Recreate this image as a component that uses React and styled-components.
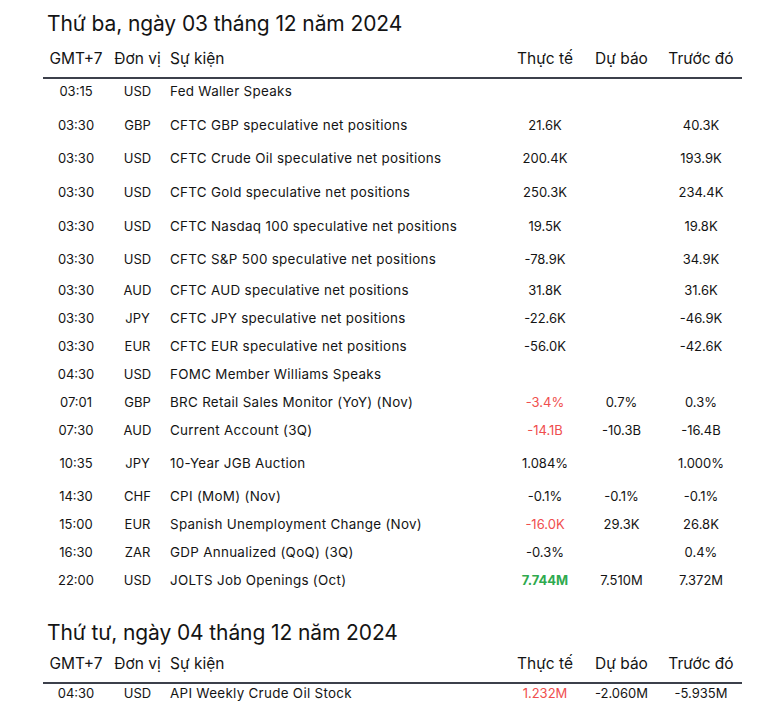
import React from "react";
import styled, { createGlobalStyle } from "styled-components";

const GlobalStyle = createGlobalStyle`
  html, body {
    margin: 0;
    padding: 0;
    background: #ffffff;
  }
  body {
    font-family: Inter, "Open Sans", "DejaVu Sans", sans-serif;
    color: #141414;
  }
`;

const days = [
  {
    title: "Thứ ba, ngày 03 tháng 12 năm 2024",
    head: 41,
    rows: [
      { h: 34, time: "03:15", unit: "USD", event: "Fed Waller Speaks" },
      { h: 33, time: "03:30", unit: "GBP", event: "CFTC GBP speculative net positions", actual: "21.6K", prev: "40.3K" },
      { h: 34, time: "03:30", unit: "USD", event: "CFTC Crude Oil speculative net positions", actual: "200.4K", prev: "193.9K" },
      { h: 34, time: "03:30", unit: "USD", event: "CFTC Gold speculative net positions", actual: "250.3K", prev: "234.4K" },
      { h: 33, time: "03:30", unit: "USD", event: "CFTC Nasdaq 100 speculative net positions", actual: "19.5K", prev: "19.8K" },
      { h: 31, time: "03:30", unit: "USD", event: "CFTC S&P 500 speculative net positions", actual: "-78.9K", prev: "34.9K" },
      { h: 28, time: "03:30", unit: "AUD", event: "CFTC AUD speculative net positions", actual: "31.8K", prev: "31.6K" },
      { h: 28, time: "03:30", unit: "JPY", event: "CFTC JPY speculative net positions", actual: "-22.6K", prev: "-46.9K" },
      { h: 28, time: "03:30", unit: "EUR", event: "CFTC EUR speculative net positions", actual: "-56.0K", prev: "-42.6K" },
      { h: 28, time: "04:30", unit: "USD", event: "FOMC Member Williams Speaks" },
      { h: 28, time: "07:01", unit: "GBP", event: "BRC Retail Sales Monitor (YoY) (Nov)", actual: "-3.4%", tone: "down", forecast: "0.7%", prev: "0.3%" },
      { h: 33, time: "07:30", unit: "AUD", event: "Current Account (3Q)", actual: "-14.1B", tone: "down", forecast: "-10.3B", prev: "-16.4B" },
      { h: 33, time: "10:35", unit: "JPY", event: "10-Year JGB Auction", actual: "1.084%", prev: "1.000%" },
      { h: 28, time: "14:30", unit: "CHF", event: "CPI (MoM) (Nov)", actual: "-0.1%", forecast: "-0.1%", prev: "-0.1%" },
      { h: 28, time: "15:00", unit: "EUR", event: "Spanish Unemployment Change (Nov)", actual: "-16.0K", tone: "down", forecast: "29.3K", prev: "26.8K" },
      { h: 28, time: "16:30", unit: "ZAR", event: "GDP Annualized (QoQ) (3Q)", actual: "-0.3%", prev: "0.4%" },
      { h: 28, time: "22:00", unit: "USD", event: "JOLTS Job Openings (Oct)", actual: "7.744M", tone: "up", forecast: "7.510M", prev: "7.372M" },
    ],
  },
  {
    title: "Thứ tư, ngày 04 tháng 12 năm 2024",
    head: 37,
    rows: [
      { h: 28, lift: 3, time: "04:30", unit: "USD", event: "API Weekly Crude Oil Stock", actual: "1.232M", tone: "down", forecast: "-2.060M", prev: "-5.935M" },
    ],
  },
];

const Page = styled.div`
  padding: 10px 40px 0 43px;
  width: 699px;
`;

const Section = styled.section`
  & + & {
    margin-top: 23px;
  }
`;

const DayTitle = styled.h2`
  margin: 0 0 0 4px;
  font-size: 21px;
  font-weight: 400;
  line-height: 28px;
  letter-spacing: -0.1px;
`;

const Grid = styled.div`
  display: grid;
  grid-template-columns: 66px 57px 341px 76px 77px 82px;
`;

const HeadRow = styled(Grid)`
  height: ${(p) => p.$h}px;
  box-sizing: border-box;
  align-items: end;
  padding-bottom: 8px;
  line-height: 20px;
  border-bottom: 2px solid #3c404b;
  font-size: 15.5px;
`;

const HeadCell = styled.div`
  text-align: ${(p) => p.$align || "center"};
  padding-left: ${(p) => (p.$align === "left" ? "4px" : "0")};
  white-space: nowrap;
`;

const Row = styled(Grid)`
  height: ${(p) => p.$h}px;
  margin-top: ${(p) => -(p.$lift || 0)}px;
  align-items: start;
  font-size: 13px;
  line-height: 24px;
`;

const Cell = styled.div`
  text-align: center;
  white-space: nowrap;
  color: ${(p) => (p.$tone === "down" ? "#f04e4e" : p.$tone === "up" ? "#2faa4f" : "#141414")};
  font-weight: ${(p) => (p.$tone === "up" ? 700 : 400)};
`;

const EventCell = styled.div`
  padding-left: 4px;
  white-space: nowrap;
  font-size: 13.4px;
  letter-spacing: 0.3px;
`;

export default function App() {
  return (
    <>
      <GlobalStyle />
      <Page>
        {days.map((day) => (
          <Section key={day.title}>
            <DayTitle>{day.title}</DayTitle>
            <HeadRow $h={day.head}>
              <HeadCell>GMT+7</HeadCell>
              <HeadCell>Đơn vị</HeadCell>
              <HeadCell $align="left">Sự kiện</HeadCell>
              <HeadCell>Thực tế</HeadCell>
              <HeadCell>Dự báo</HeadCell>
              <HeadCell>Trước đó</HeadCell>
            </HeadRow>
            {day.rows.map((r, i) => (
              <Row key={i} $h={r.h} $lift={r.lift}>
                <Cell>{r.time}</Cell>
                <Cell>{r.unit}</Cell>
                <EventCell>{r.event}</EventCell>
                <Cell $tone={r.tone}>{r.actual}</Cell>
                <Cell>{r.forecast}</Cell>
                <Cell>{r.prev}</Cell>
              </Row>
            ))}
          </Section>
        ))}
      </Page>
    </>
  );
}
